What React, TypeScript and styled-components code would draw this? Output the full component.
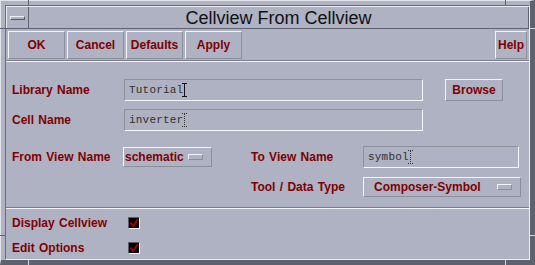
import styled, { createGlobalStyle } from "styled-components";

const GlobalStyle = createGlobalStyle`
  html, body {
    margin: 0;
    padding: 0;
    background: #aeb2c3;
  }
  body {
    font-family: "Liberation Sans", Arial, sans-serif;
  }
`;

const Window = styled.div`
  position: relative;
  box-sizing: border-box;
  width: 535px;
  height: 265px;
  background: #aeb2c3;
  border-top: 1px solid #e2e4ea;
  border-left: 1px solid #e2e4ea;
  border-right: 5px solid #5e616e;
  border-bottom: 5px solid #5e616e;
  padding: 4px 0 0 4px;
`;

const Tick = styled.span<{ $light?: boolean }>`
  position: absolute;
  background: ${(p) => (p.$light ? "#d6d8e0" : "#5e616e")};
`;

const Inner = styled.div`
  box-sizing: border-box;
  height: 100%;
  display: flex;
  flex-direction: column;
  border-top: 1px solid #6a6d7a;
  border-left: 1px solid #6a6d7a;
  border-right: 1px solid #eef0f4;
  border-bottom: 1px solid #eef0f4;
`;

const TitleBar = styled.div`
  box-sizing: border-box;
  height: 23px;
  display: flex;
  border-top: 1px solid #e6e8ee;
  border-bottom: 1px solid #5e616e;
`;

const MenuBox = styled.div`
  box-sizing: border-box;
  width: 23px;
  display: flex;
  align-items: center;
  padding-left: 3px;
  border-left: 1px solid #e6e8ee;
  border-right: 1px solid #5e616e;
`;

const MenuDash = styled.span`
  box-sizing: border-box;
  width: 15px;
  height: 4px;
  border-top: 1px solid #eef0f4;
  border-left: 1px solid #eef0f4;
  border-right: 1px solid #55586a;
  border-bottom: 1px solid #55586a;
`;

const Title = styled.div`
  flex: 1;
  text-align: center;
  font-size: 18px;
  line-height: 22px;
  color: #111;
  border-right: 1px solid #5e616e;
`;

const ButtonRow = styled.div`
  box-sizing: border-box;
  height: 32px;
  display: flex;
  gap: 2px;
  padding: 2px 2px 1px 2px;
  border-bottom: 1px solid #7a7d8a;
`;

const Button = styled.button<{ $w: number }>`
  box-sizing: border-box;
  width: ${(p) => p.$w}px;
  height: 28px;
  margin: 0;
  padding: 0;
  background: #aeb2c3;
  border-top: 1px solid #f4f5f8;
  border-left: 1px solid #f4f5f8;
  border-right: 1px solid #8b8e9b;
  border-bottom: 1px solid #8b8e9b;
  color: #800000;
  font-family: "Liberation Sans", Arial, sans-serif;
  font-weight: bold;
  font-size: 12px;
`;

const Spacer = styled.div`
  flex: 1;
`;

const Content = styled.div`
  flex: 1;
  border-top: 1px solid #f4f5f8;
  padding: 17px 0 0 6px;
`;

const Row = styled.div<{ $h: number; $mt?: number }>`
  display: flex;
  align-items: center;
  height: ${(p) => p.$h}px;
  margin-top: ${(p) => p.$mt ?? 0}px;
`;

const Label = styled.span<{ $w?: number }>`
  width: ${(p) => (p.$w ? `${p.$w}px` : "auto")};
  flex: none;
  color: #800000;
  font-weight: bold;
  font-size: 12px;
  word-spacing: 1px;
  white-space: nowrap;
`;

const Field = styled.div<{ $w: number }>`
  box-sizing: border-box;
  width: ${(p) => p.$w}px;
  height: 22px;
  display: flex;
  align-items: center;
  padding-left: 4px;
  border-top: 1px solid #8e919c;
  border-left: 1px solid #8e919c;
  border-right: 1px solid #f6f7fa;
  border-bottom: 1px solid #f6f7fa;
  font-family: "Liberation Mono", "Courier New", monospace;
  font-size: 11px;
  letter-spacing: 0.2px;
  color: #303030;
`;

const Caret = styled.span<{ $active?: boolean }>`
  position: relative;
  width: 1px;
  height: 14px;
  margin-left: 1px;
  border-left: 1px ${(p) => (p.$active ? "solid #111" : "dotted #333")};
  &::before,
  &::after {
    content: "";
    position: absolute;
    left: -3px;
    width: 5px;
    border-top: 1px ${(p) => (p.$active ? "solid #111" : "dotted #333")};
  }
  &::before {
    top: 0;
  }
  &::after {
    bottom: 0;
  }
`;

const Browse = styled(Button)`
  height: 22px;
  margin-left: 22px;
`;

const Grid = styled.div`
  display: grid;
  grid-template-columns: 111px 128px 112px auto;
  grid-template-rows: 22px 20px;
  row-gap: 9px;
  align-items: center;
  margin-top: 15px;
`;

const Cyclic = styled.div<{ $w: number; $pad: number }>`
  box-sizing: border-box;
  width: ${(p) => p.$w}px;
  height: 20px;
  display: flex;
  align-items: center;
  justify-content: space-between;
  padding: 0 8px 0 ${(p) => p.$pad}px;
  border-top: 1px solid #f4f5f8;
  border-left: 1px solid #f4f5f8;
  border-right: 1px solid #8b8e9b;
  border-bottom: 1px solid #8b8e9b;
  color: #800000;
  font-weight: bold;
  font-size: 12px;
`;

const Indicator = styled.span`
  box-sizing: border-box;
  width: 15px;
  height: 6px;
  border-top: 1px solid #f4f5f8;
  border-left: 1px solid #f4f5f8;
  border-right: 1px solid #8b8e9b;
  border-bottom: 1px solid #8b8e9b;
`;

const Separator = styled.div`
  margin: 10px 0 0 -6px;
  border-top: 1px solid #7a7d8a;
  border-bottom: 1px solid #f4f5f8;
`;

const Checks = styled.div`
  display: flex;
  flex-direction: column;
  gap: 13px;
  padding-top: 8px;
`;

const CheckRow = styled.div`
  display: flex;
  align-items: center;
  height: 12px;
`;

const Box = styled.span`
  box-sizing: border-box;
  width: 12px;
  height: 12px;
  display: flex;
  background: #000;
  border-top: 1px solid #5a5d68;
  border-left: 1px solid #5a5d68;
  border-right: 1px solid #f4f5f8;
  border-bottom: 1px solid #f4f5f8;
`;

const Check = () => (
  <Box>
    <svg width="10" height="10" viewBox="0 0 10 10">
      <polyline points="1.5,4.5 4,8 9,1" fill="none" stroke="#a00000" strokeWidth="2" />
    </svg>
  </Box>
);

const App = () => (
  <>
    <GlobalStyle />
    <Window>
      <Tick style={{ left: 27, top: -1, width: 1, height: 5 }} />
      <Tick style={{ left: 504, top: -1, width: 1, height: 5 }} />
      <Tick style={{ left: -1, top: 27, width: 5, height: 1 }} />
      <Tick style={{ left: -1, top: 234, width: 5, height: 1 }} />
      <Tick $light style={{ right: -5, top: 27, width: 5, height: 1 }} />
      <Tick $light style={{ right: -5, top: 234, width: 5, height: 1 }} />
      <Tick $light style={{ left: 27, bottom: -5, width: 1, height: 5 }} />
      <Tick $light style={{ left: 504, bottom: -5, width: 1, height: 5 }} />
      <Inner>
        <TitleBar>
          <MenuBox>
            <MenuDash />
          </MenuBox>
          <Title>Cellview From Cellview</Title>
        </TitleBar>
        <ButtonRow>
          <Button $w={57}>OK</Button>
          <Button $w={57}>Cancel</Button>
          <Button $w={57}>Defaults</Button>
          <Button $w={57}>Apply</Button>
          <Spacer />
          <Button $w={32}>Help</Button>
        </ButtonRow>
        <Content>
          <Row $h={22}>
            <Label $w={112}>Library Name</Label>
            <Field $w={299}>
              Tutorial
              <Caret $active />
            </Field>
            <Browse $w={58}>Browse</Browse>
          </Row>
          <Row $h={22} $mt={8}>
            <Label $w={112}>Cell Name</Label>
            <Field $w={299}>
              inverter
              <Caret />
            </Field>
          </Row>
          <Grid>
            <Label>From View Name</Label>
            <Cyclic $w={89} $pad={1}>
              schematic
              <Indicator />
            </Cyclic>
            <Label>To View Name</Label>
            <Field $w={156}>
              symbol
              <Caret />
            </Field>
            <span />
            <span />
            <Label>Tool / Data Type</Label>
            <Cyclic $w={158} $pad={10}>
              Composer-Symbol
              <Indicator />
            </Cyclic>
          </Grid>
          <Separator />
          <Checks>
            <CheckRow>
              <Label $w={116}>Display Cellview</Label>
              <Check />
            </CheckRow>
            <CheckRow>
              <Label $w={116}>Edit Options</Label>
              <Check />
            </CheckRow>
          </Checks>
        </Content>
      </Inner>
    </Window>
  </>
);

export default App;
